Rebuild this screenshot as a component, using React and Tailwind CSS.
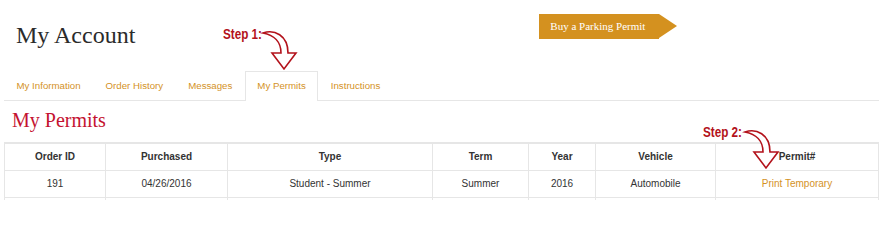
import React from 'react';

const tabs = ['My Information', 'Order History', 'Messages', 'My Permits', 'Instructions'];

const columns = [
  { label: 'Order ID', w: 'w-[101px]' },
  { label: 'Purchased', w: 'w-[122px]' },
  { label: 'Type', w: 'w-[205px]' },
  { label: 'Term', w: 'w-[96px]' },
  { label: 'Year', w: 'w-[67px]' },
  { label: 'Vehicle', w: 'w-[120px]' },
  { label: 'Permit#', w: '' },
];

const permit = ['191', '04/26/2016', 'Student - Summer', 'Summer', '2016', 'Automobile'];

// hollow curved arrow used by the step callouts
const StepArrow = ({ className }) => (
  <svg className={className} width="40" height="44" viewBox="0 0 40 44">
    <path
      d="M3 5 C14 1 28 7 28 25 L36 25 L24 41 L12 25 L21 25 C21 14 14 7 3 5 Z"
      fill="white"
      stroke="#b3121b"
      strokeWidth="1.6"
      strokeLinejoin="miter"
    />
  </svg>
);

const Step = ({ label, className }) => (
  <span
    className={`absolute origin-left scale-x-[0.78] font-['Liberation_Sans',Arial,sans-serif] text-[15px] font-bold leading-none whitespace-nowrap text-[#b3121b] ${className}`}
  >
    {label}
  </span>
);

const App = () => {
  return (
    <div className="relative h-[200px] w-[883px] overflow-hidden bg-white font-['Liberation_Sans',Arial,sans-serif]">
      {/* header */}
      <div className="flex h-[71px] items-start">
        <h1 className="ml-4 mt-[23px] font-['Liberation_Serif',serif] text-[24px] leading-none text-[#2b2b2b]">
          My Account
        </h1>
        <div className="ml-[404px] mt-[14px] flex h-[25px]">
          <div className="flex items-center bg-[#d4911f] pl-[11px] pr-[14px] font-['Liberation_Serif',serif] text-[11px] text-white">
            Buy a Parking Permit
          </div>
          <div className="h-0 w-0 border-y-[12.5px] border-l-[18px] border-y-transparent border-l-[#d4911f]" />
        </div>
      </div>

      {/* tabs */}
      <div className="mx-1 flex border-b border-[#e6e6e6]">
        {tabs.map((t) => (
          <div
            key={t}
            className={
              t === 'My Permits'
                ? '-mb-px border border-b-0 border-[#e6e6e6] bg-white px-[11.5px] pt-[8px] pb-[9px] text-[9.7px] leading-[12px] text-[#d4921f]'
                : 'border border-b-0 border-transparent px-[11.5px] pt-[8px] pb-[8px] text-[9.7px] leading-[12px] text-[#d4921f]'
            }
          >
            {t}
          </div>
        ))}
      </div>

      {/* section title */}
      <h2 className="ml-3 mt-[9px] font-['Liberation_Serif',serif] text-[20px] leading-none text-[#c41230]">
        My Permits
      </h2>

      {/* permits table */}
      <table className="mx-1 mt-[12px] w-[875px] table-fixed border-collapse border-t-2 border-[#e6e6e6] text-[10px] text-[#333]">
        <thead>
          <tr className="h-[27px]">
            {columns.map((c) => (
              <th key={c.label} className={`border border-[#e6e6e6] text-center font-bold ${c.w}`}>
                {c.label}
              </th>
            ))}
          </tr>
        </thead>
        <tbody>
          <tr className="h-[27px]">
            {permit.map((v, i) => (
              <td key={i} className="border border-[#e6e6e6] text-center">
                {v}
              </td>
            ))}
            <td className="border border-[#e6e6e6] text-center text-[#d4921f]">Print Temporary</td>
          </tr>
          <tr className="h-[27px]">
            {columns.map((c) => (
              <td key={c.label} className="border border-[#e6e6e6]" />
            ))}
          </tr>
        </tbody>
      </table>

      {/* step callouts */}
      <Step label="Step 1:" className="left-[223px] top-[26px]" />
      <StepArrow className="absolute left-[260px] top-[28px]" />
      <Step label="Step 2:" className="left-[703px] top-[124px]" />
      <StepArrow className="absolute left-[742px] top-[127px]" />
    </div>
  );
};

export default App;
